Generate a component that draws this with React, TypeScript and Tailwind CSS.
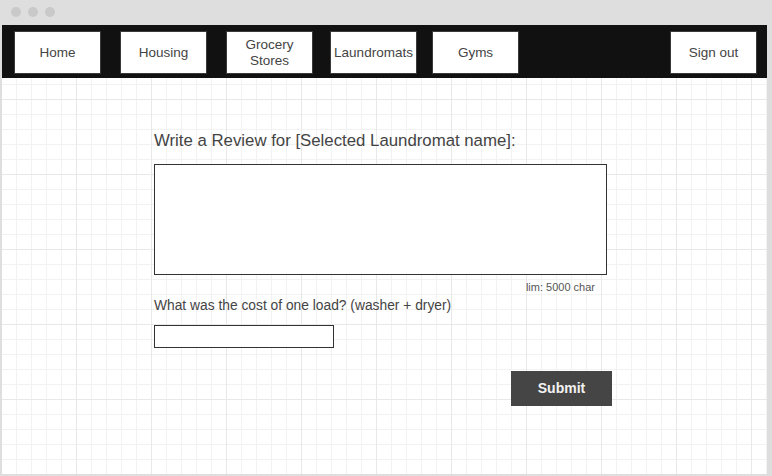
import React from "react";

const navItems = [
  { label: "Home", ml: "ml-[12px]" },
  { label: "Housing", ml: "ml-[19px]" },
  { label: "Grocery Stores", ml: "ml-[19px]" },
  { label: "Laundromats", ml: "ml-[17px]" },
  { label: "Gyms", ml: "ml-[15px]" },
];

function NavButton({ label, className = "" }: { label: string; className?: string }) {
  return (
    <div
      className={`w-[87px] h-[43px] bg-white border border-[#3a3a3a] flex items-center justify-center text-center text-[13.5px] leading-[16px] text-[#444] ${className}`}
    >
      {label === "Grocery Stores" ? (
        <span>
          Grocery
          <br />
          Stores
        </span>
      ) : (
        label
      )}
    </div>
  );
}

export default function App() {
  return (
    <div
      className="w-[772px] h-[476px] bg-[#dedede] flex flex-col pl-[2px] pr-[5px] pb-[2px] overflow-hidden"
      style={{ fontFamily: '"Liberation Sans", Arial, sans-serif' }}
    >
      {/* window title bar */}
      <div className="h-[25px] shrink-0 flex items-center gap-[7px] pl-[9px] pb-[2px]">
        <span className="w-[10px] h-[10px] rounded-full bg-[#c9c9c9]" />
        <span className="w-[10px] h-[10px] rounded-full bg-[#c9c9c9]" />
        <span className="w-[10px] h-[10px] rounded-full bg-[#c9c9c9]" />
      </div>

      {/* nav */}
      <nav className="h-[53px] shrink-0 bg-[#111] flex items-start pt-[6px] pr-[10px]">
        {navItems.map((item) => (
          <NavButton key={item.label} label={item.label} className={item.ml} />
        ))}
        <NavButton label="Sign out" className="ml-auto" />
      </nav>

      {/* canvas */}
      <main className="flex-1 bg-white bg-[linear-gradient(to_right,#e8e8e8_1px,transparent_1px),linear-gradient(to_bottom,#e8e8e8_1px,transparent_1px),linear-gradient(to_right,#f2f2f2_1px,transparent_1px),linear-gradient(to_bottom,#f2f2f2_1px,transparent_1px)] bg-[size:75px_75px,75px_75px,15px_15px,15px_15px] bg-[position:74px_21px,74px_21px,14px_6px,14px_6px]">
        <div className="ml-[152px] w-[453px] pt-[53px] flex flex-col text-[#444]">
          <h1 className="text-[16.8px] leading-[20px]">
            Write a Review for [Selected Laundromat name]:
          </h1>
          <textarea className="mt-[13px] w-[453px] h-[111px] border border-[#333] bg-white resize-none outline-none" />
          <div className="mt-[5px] pr-[12px] text-right text-[11px] leading-[14px] text-[#555]">
            lim: 5000 char
          </div>
          <p className="mt-[3px] text-[13.8px] leading-[17px]">
            What was the cost of one load? (washer + dryer)
          </p>
          <input
            type="text"
            className="mt-[11px] w-[180px] h-[23px] border border-[#333] bg-white outline-none"
          />
          <button className="mt-[23px] ml-[357px] w-[101px] h-[35px] bg-[#454545] text-[#f2f2f2] text-[14px] font-bold">
            Submit
          </button>
        </div>
      </main>
    </div>
  );
}
